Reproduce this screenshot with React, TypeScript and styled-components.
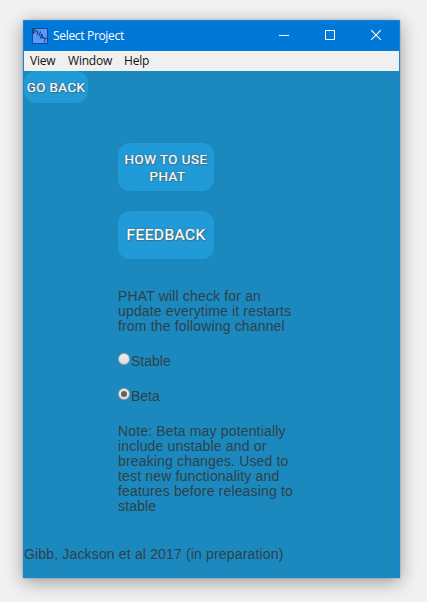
import React, { useState } from 'react';
import styled, { createGlobalStyle } from 'styled-components';

const GlobalStyle = createGlobalStyle`
  * { box-sizing: border-box; }
  body { margin: 0; background: #f1f1f1; overflow: hidden; }
`;

const Desktop = styled.div`
  width: 427px;
  height: 602px;
  padding: 20px 27px 24px 23px;
  background: #f1f1f1;
`;

const Window = styled.main`
  display: flex;
  flex-direction: column;
  width: 377px;
  height: 558px;
  border: 1px solid #1883d7;
  background: #1b89be;
  box-shadow: 0 4px 17px rgba(0, 0, 0, 0.36), 0 0 2px rgba(0, 0, 0, 0.25);
`;

const TitleBar = styled.header`
  display: flex;
  align-items: center;
  flex: none;
  height: 30px;
  padding: 0 1px 0 8px;
  background: #0078d7;
  color: #fff;
`;

const Title = styled.h1`
  flex: 1;
  margin: 0 0 0 5px;
  font: 400 12px/16px "Open Sans", sans-serif;
  letter-spacing: -0.32px;
  white-space: nowrap;
`;

const WindowButton = styled.button`
  display: grid;
  place-items: start center;
  width: 46px;
  height: 30px;
  padding: 9px 0 0;
  border: 0;
  background: none;
  color: #fff;
  &:last-child { width: 45px; }
`;

const MenuBar = styled.nav`
  display: flex;
  align-items: center;
  flex: none;
  gap: 12px;
  height: 20px;
  padding-left: 6px;
  background: #f0f0f0;
`;

const MenuItem = styled.span<{ $width: number }>`
  width: ${(p) => p.$width}px;
  font: 400 12px/18px "Open Sans", sans-serif;
  letter-spacing: -0.2px;
  color: #111;
  white-space: nowrap;
`;

const Content = styled.section`
  display: flex;
  flex-direction: column;
  flex: 1;
  font: 400 14px/15px "Liberation Sans", Arial, sans-serif;
  letter-spacing: 0.16px;
  color: #2f414a;
`;

const ActionButton = styled.button<{ $w: number; $h: number; $size: number; $spacing?: number }>`
  display: flex;
  flex-direction: column;
  align-items: center;
  justify-content: center;
  flex: none;
  width: ${(p) => p.$w}px;
  height: ${(p) => p.$h}px;
  padding: 1px 0 0;
  border: 0;
  border-radius: 12px;
  background: #209bd8;
  color: #fff;
  font: 400 ${(p) => p.$size}px/17px Roboto, sans-serif;
  letter-spacing: ${(p) => p.$spacing ?? 0}px;
  -webkit-text-stroke: 0.2px #fff;
  text-shadow: 0 0 2px #555, 1px 1px 1px rgba(85, 85, 85, 0.5);
  white-space: nowrap;
`;

const SecondLine = styled.span`
  padding-left: 3px;
`;

const Column = styled.div`
  display: flex;
  flex-direction: column;
  width: 184px;
  margin: 40px 0 0 94px;
`;

const Buttons = styled.div`
  display: flex;
  flex-direction: column;
  gap: 20px;
`;

const Paragraph = styled.p<{ $top: number }>`
  margin: ${(p) => p.$top}px 0 0;
  white-space: nowrap;
`;

const Option = styled.label<{ $top: number }>`
  display: flex;
  align-items: flex-start;
  height: 15px;
  margin-top: ${(p) => p.$top}px;
  letter-spacing: 0;
`;

const Radio = styled.input`
  appearance: none;
  display: grid;
  place-items: center;
  flex: none;
  width: 12px;
  height: 12px;
  margin: -1px 1px 0 0;
  border: 1px solid #a5a5a5;
  border-radius: 50%;
  background: linear-gradient(#eee, #dedede);
  &:checked::before {
    content: "";
    width: 6px;
    height: 6px;
    border-radius: 50%;
    background: #606060;
  }
`;

const Citation = styled.footer`
  margin-top: 33px;
  white-space: nowrap;
`;

const AppIcon = () => (
  <svg width="16" height="16" viewBox="0 0 16 16" fill="none">
    <rect x=".5" y=".5" width="15" height="15" fill="#559bff" stroke="#174a91" />
    <path
      d="M1.5 6V1.5L4 2v2L1.5 4M5 7.5l1-5M7.5 8.5l1-5M5.5 5l2.5 1M8 11l2-5 1 5M8.5 9h2.5M11 9.5l4 1M13 10l-.5 4.5"
      stroke="#122b58"
      strokeWidth=".8"
    />
  </svg>
);

export default function App() {
  const [channel, setChannel] = useState('beta');
  return (
    <Desktop>
      <GlobalStyle />
      <Window>
        <TitleBar>
          <AppIcon />
          <Title>Select Project</Title>
          <WindowButton aria-label="Minimize">
            <svg width="10" height="10"><path d="M0 5.5h10" stroke="currentColor" /></svg>
          </WindowButton>
          <WindowButton aria-label="Maximize">
            <svg width="10" height="10"><path d="M.5.5h9v9h-9z" fill="none" stroke="currentColor" /></svg>
          </WindowButton>
          <WindowButton aria-label="Close">
            <svg width="10" height="10"><path d="M0 0l10 10M10 0L0 10" stroke="currentColor" strokeWidth="1.1" /></svg>
          </WindowButton>
        </TitleBar>
        <MenuBar>
          <MenuItem $width={26}>View</MenuItem>
          <MenuItem $width={44}>Window</MenuItem>
          <MenuItem $width={25}>Help</MenuItem>
        </MenuBar>
        <Content>
          <ActionButton $w={64} $h={32} $size={13.33} $spacing={0.45}>GO BACK</ActionButton>
          <Column>
            <Buttons>
              <ActionButton $w={96} $h={48} $size={13.33} $spacing={0.5}>
                <span>HOW TO USE</span>
                <SecondLine>PHAT</SecondLine>
              </ActionButton>
              <ActionButton $w={96} $h={48} $size={15.5} $spacing={0.4}>FEEDBACK</ActionButton>
            </Buttons>
            <Paragraph $top={30}>
              PHAT will check for an<br />
              update everytime it restarts<br />
              from the following channel
            </Paragraph>
            <Option $top={20}>
              <Radio type="radio" name="channel" checked={channel === 'stable'} onChange={() => setChannel('stable')} />
              Stable
            </Option>
            <Option $top={20}>
              <Radio type="radio" name="channel" checked={channel === 'beta'} onChange={() => setChannel('beta')} />
              Beta
            </Option>
            <Paragraph $top={20}>
              Note: Beta may potentially<br />
              include unstable and or<br />
              breaking changes. Used to<br />
              test new functionality and<br />
              features before releasing to<br />
              stable
            </Paragraph>
          </Column>
          <Citation>Gibb, Jackson et al 2017 (in preparation)</Citation>
        </Content>
      </Window>
    </Desktop>
  );
}
